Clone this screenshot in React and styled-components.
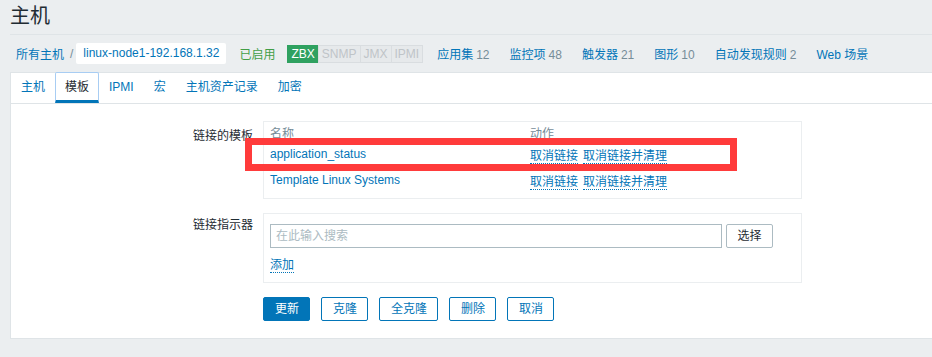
import React from "react";
import styled, { createGlobalStyle } from "styled-components";

const GlobalStyle = createGlobalStyle`
	body {
		margin: 0;
		background: #ebeef0;
		font-family: "Liberation Sans", "Noto Sans CJK SC", sans-serif;
		font-size: 12px;
		color: #1f2c33;
	}
`;

const Page = styled.div`
	padding-left: 10px;
`;

const Title = styled.h1`
	margin: 0;
	height: 34px;
	line-height: 32px;
	font-size: 20px;
	font-weight: normal;
	border-bottom: 1px solid #dfe4e7;
`;

const Nav = styled.div`
	display: flex;
	align-items: center;
	height: 37px;
	padding-left: 6px;
	white-space: nowrap;
`;

const Crumb = styled.span`
	color: #0275b8;
`;

const Slash = styled.span`
	color: #768d99;
	margin: 0 3px 0 6px;
`;

const HostBox = styled.span`
	background: #fff;
	color: #0275b8;
	padding: 0 7px;
	height: 21px;
	line-height: 21px;
	border-radius: 2px;
`;

const Status = styled.span`
	color: #429e47;
	margin: 0 12px 0 13px;
`;

const Badges = styled.span`
	display: flex;
	margin-right: 14px;
`;

const Badge = styled.span`
	height: 16px;
	line-height: 16px;
	padding: 0 3px;
	border: 1px solid ${(p) => (p.$on ? "#2fa160" : "#d9dde0")};
	background: ${(p) => (p.$on ? "#2fa160" : "#e6e9eb")};
	color: ${(p) => (p.$on ? "#fff" : "#bfc4c8")};
	& + & {
		margin-left: -1px;
	}
`;

const NavLink = styled.span`
	color: #0275b8;
	margin-right: 20px;
`;

const Count = styled.span`
	color: #768d99;
	margin-left: 3px;
`;

const Panel = styled.div`
	background: #fff;
	border: 1px solid #dfe4e7;
	border-right: none;
`;

const Tabs = styled.div`
	display: flex;
	height: 30px;
	border-bottom: 1px solid #dfe4e7;
`;

const Tab = styled.div`
	box-sizing: border-box;
	height: 31px;
	margin-top: -1px;
	padding: 0 9px;
	line-height: 29px;
	border: 1px solid ${(p) => (p.$active ? "#a8cdf3" : "transparent")};
	border-bottom: ${(p) => (p.$active ? "3px solid #0275b8" : "1px solid transparent")};
	color: ${(p) => (p.$active ? "#1f2c33" : "#0275b8")};
	border-radius: 2px 2px 0 0;
`;

const Form = styled.div`
	display: grid;
	grid-template-columns: 242px 539px;
	column-gap: 10px;
	row-gap: 14px;
	padding: 17px 0 17px;
`;

const Label = styled.div`
	text-align: right;
	padding-top: ${(p) => p.$top || 4}px;
`;

const Box = styled.div`
	position: relative;
	border: 1px solid #ebeef0;
	padding: 5px 5px;
`;

const Table = styled.table`
	border-collapse: collapse;
	width: 100%;
`;

const Th = styled.th`
	text-align: left;
	font-weight: normal;
	color: #768d99;
	height: 14px;
	line-height: 14px;
	padding: 0 1px;
	width: ${(p) => p.$w || "auto"};
`;

const Td = styled.td`
	height: 26px;
	padding: 0 1px;
	color: #0275b8;
`;

const Action = styled.span`
	color: #0275b8;
	border-bottom: 1px dotted #0275b8;
	margin-right: 5px;
`;

const Marker = styled.div`
	position: absolute;
	left: -19px;
	top: 16px;
	width: 492px;
	height: 33px;
	box-sizing: border-box;
	border: 7px solid #ff3b3b;
	pointer-events: none;
`;

const InputRow = styled.div`
	display: flex;
	gap: 4px;
	padding: 5px 1px;
`;

const Input = styled.div`
	box-sizing: border-box;
	width: 452px;
	height: 24px;
	line-height: 22px;
	border: 1px solid #acbbc2;
	padding: 0 5px;
	color: #acbbc2;
`;

const PlainButton = styled.div`
	box-sizing: border-box;
	width: 47px;
	height: 24px;
	line-height: 22px;
	text-align: center;
	border: 1px solid #acbbc2;
	border-radius: 2px;
	color: #1f2c33;
`;

const AddRow = styled.div`
	padding: 5px 1px;
	line-height: 14px;
`;

const Buttons = styled.div`
	grid-column: 2;
	display: flex;
	gap: 11px;
`;

const Button = styled.div`
	box-sizing: border-box;
	height: 24px;
	line-height: 22px;
	padding: 0 10px 0 11px;
	border: 1px solid #0275b8;
	border-radius: 2px;
	background: ${(p) => (p.$primary ? "#0275b8" : "#fff")};
	color: ${(p) => (p.$primary ? "#fff" : "#0275b8")};
`;

const tabs = ["主机", "模板", "IPMI", "宏", "主机资产记录", "加密"];

const links = [
	["应用集", 12],
	["监控项", 48],
	["触发器", 21],
	["图形", 10],
	["自动发现规则", 2],
	["Web 场景"],
];

const templates = ["application_status", "Template Linux Systems"];

export default function App() {
	return (
		<Page>
			<GlobalStyle />
			<Title>主机</Title>
			<Nav>
				<Crumb>所有主机</Crumb>
				<Slash>/</Slash>
				<HostBox>linux-node1-192.168.1.32</HostBox>
				<Status>已启用</Status>
				<Badges>
					<Badge $on>ZBX</Badge>
					<Badge>SNMP</Badge>
					<Badge>JMX</Badge>
					<Badge>IPMI</Badge>
				</Badges>
				{links.map(([name, n]) => (
					<NavLink key={name}>
						{name}
						{n !== undefined && <Count>{n}</Count>}
					</NavLink>
				))}
			</Nav>
			<Panel>
				<Tabs>
					{tabs.map((t) => (
						<Tab key={t} $active={t === "模板"}>
							{t}
						</Tab>
					))}
				</Tabs>
				<Form>
					<Label $top={5}>链接的模板</Label>
					<Box>
						<Table>
							<thead>
								<tr>
									<Th $w="258px">名称</Th>
									<Th>动作</Th>
								</tr>
							</thead>
							<tbody>
								{templates.map((t) => (
									<tr key={t}>
										<Td>{t}</Td>
										<Td>
											<Action>取消链接</Action>
											<Action>取消链接并清理</Action>
										</Td>
									</tr>
								))}
							</tbody>
						</Table>
						<Marker />
					</Box>
					<Label $top={2}>链接指示器</Label>
					<Box>
						<InputRow>
							<Input>在此输入搜索</Input>
							<PlainButton>选择</PlainButton>
						</InputRow>
						<AddRow>
							<Action>添加</Action>
						</AddRow>
					</Box>
					<Buttons>
						<Button $primary>更新</Button>
						<Button>克隆</Button>
						<Button>全克隆</Button>
						<Button>删除</Button>
						<Button>取消</Button>
					</Buttons>
				</Form>
			</Panel>
		</Page>
	);
}
